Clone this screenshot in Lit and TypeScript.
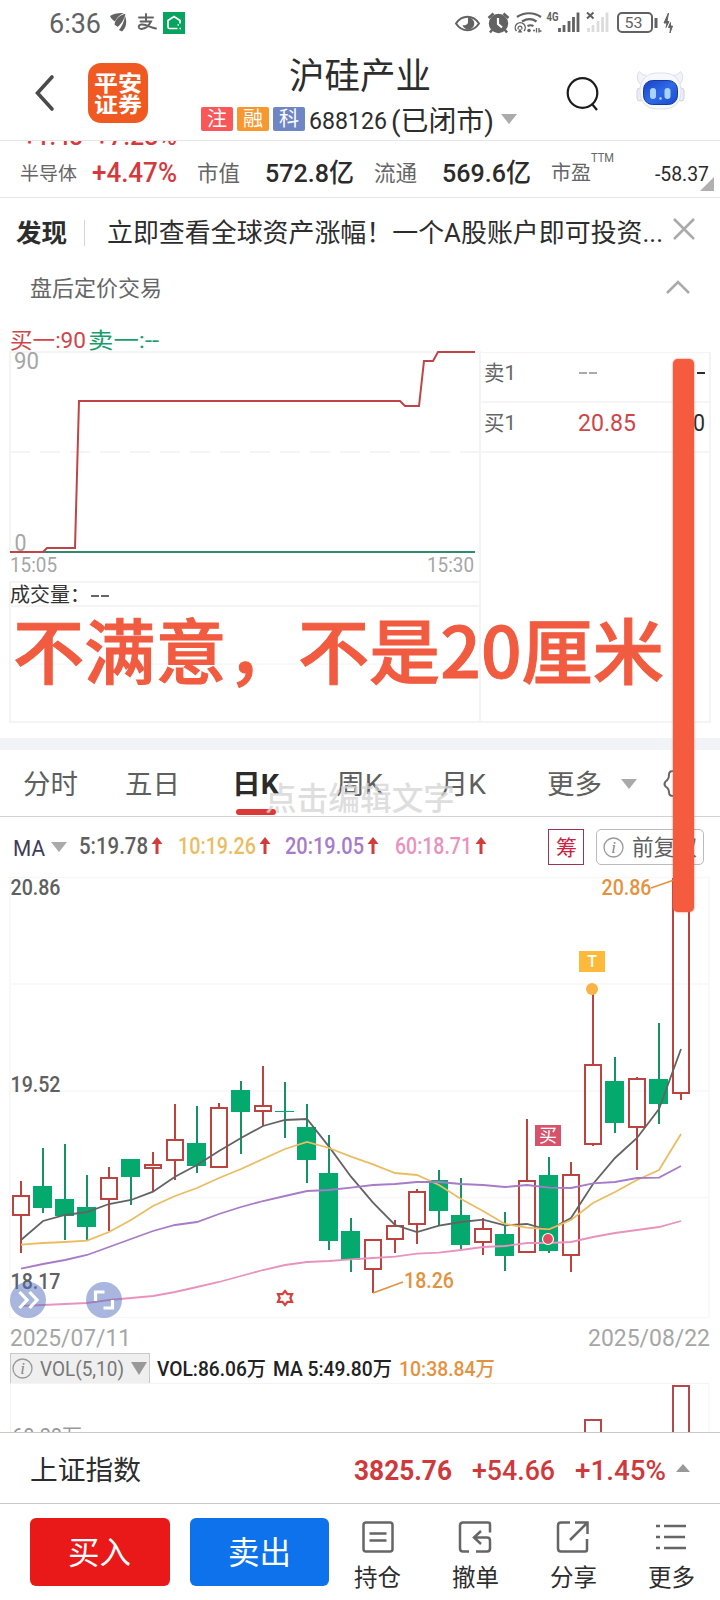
import { LitElement, css, html, svg } from "lit";
import { customElement, property } from "lit/decorators.js";

// [open side top, open side bottom, high, low] in chart pixels, "r" up, "g" down
type Candle = ["r" | "g", number, number, number, number];

const CANDLES: Candle[] = [
  ["r", 1195, 1216, 1181, 1253],
  ["g", 1186, 1208, 1148, 1213],
  ["g", 1199, 1216, 1144, 1240],
  ["g", 1207, 1227, 1175, 1240],
  ["r", 1177, 1200, 1167, 1231],
  ["g", 1159, 1177, 1159, 1205],
  ["r", 1164, 1169, 1152, 1192],
  ["r", 1139, 1161, 1104, 1180],
  ["g", 1143, 1166, 1106, 1173],
  ["r", 1107, 1168, 1103, 1168],
  ["g", 1090, 1112, 1081, 1154],
  ["r", 1105, 1112, 1066, 1126],
  ["g", 1111, 1112, 1082, 1138],
  ["g", 1127, 1160, 1104, 1183],
  ["g", 1173, 1241, 1135, 1250],
  ["g", 1231, 1260, 1218, 1272],
  ["r", 1239, 1270, 1239, 1293],
  ["r", 1225, 1240, 1220, 1253],
  ["r", 1191, 1225, 1189, 1244],
  ["g", 1180, 1211, 1170, 1226],
  ["g", 1215, 1245, 1178, 1249],
  ["r", 1228, 1243, 1218, 1255],
  ["g", 1234, 1256, 1212, 1271],
  ["r", 1180, 1253, 1119, 1253],
  ["g", 1175, 1251, 1157, 1253],
  ["r", 1174, 1256, 1162, 1272],
  ["r", 1064, 1145, 990, 1146],
  ["g", 1081, 1123, 1057, 1133],
  ["r", 1078, 1128, 1077, 1170],
  ["g", 1079, 1104, 1023, 1124],
  ["r", 878, 1094, 878, 1100],
];

// offsets below y=1050, in thirds of a pixel
const AVERAGES = [
  {
    color: "#636363",
    values: [570, 513, 495, 486, 462, 450, 425, 380, 345, 303, 264, 228, 210, 207, 290, 380, 458, 525, 546, 527, 516, 509, 526, 522, 540, 504, 402, 324, 264, 177, -3],
  },
  {
    color: "#eabd62",
    values: [584, 579, 576, 572, 546, 510, 468, 438, 414, 384, 357, 327, 297, 276, 294, 320, 343, 369, 375, 405, 447, 483, 522, 533, 538, 510, 459, 426, 390, 360, 252],
  },
  {
    color: "#a87bc8",
    values: [656, 642, 630, 615, 591, 567, 543, 525, 516, 492, 471, 453, 438, 423, 420, 413, 405, 402, 396, 396, 402, 405, 411, 405, 413, 414, 400, 396, 384, 383, 348],
  },
  {
    color: "#e992be",
    values: [768, 765, 762, 759, 750, 744, 738, 726, 711, 696, 678, 660, 645, 636, 633, 628, 624, 620, 611, 608, 600, 591, 588, 579, 579, 576, 561, 549, 540, 531, 513],
  },
];

const FONT = "Roboto, 'Noto Sans CJK SC', sans-serif";
const candleX = (i: number) => 21 + i * 22;

// Single line of text squeezed to a given width, centred on its box
@customElement("fit-text")
export class FitText extends LitElement {
  static styles = css`
    :host {
      display: inline-block;
      flex: none;
    }
    svg {
      display: block;
      overflow: visible;
      font-family: var(--fit-font, Roboto, "Noto Sans CJK SC", sans-serif);
      fill: currentColor;
      stroke: currentColor;
      stroke-width: var(--fit-stroke, 0);
    }
  `;

  @property({ type: Number }) w = 0;
  @property({ type: Number }) size = 20;
  @property({ type: Number }) weight = 400;
  @property() text = "";

  render() {
    return html`
      <svg width=${this.w} height=${this.size}>
        <text
          x="0"
          y=${this.size * 0.86}
          font-size=${this.size}
          font-weight=${this.weight}
          textLength=${this.w}
          lengthAdjust="spacingAndGlyphs"
        >${this.text}</text>
      </svg>
    `;
  }
}

const fit = (text: string, w: number, size: number, weight = 400, cls = "") =>
  html`<fit-text class=${cls} .text=${text} .w=${w} .size=${size} .weight=${weight}></fit-text>`;

@customElement("status-bar")
export class StatusBar extends LitElement {
  static styles = css`
    :host {
      display: flex;
      align-items: center;
      height: 46px;
      padding: 0 46px 0 49px;
      box-sizing: border-box;
      color: #626262;
    }
    svg {
      display: block;
      flex: none;
    }
    .left {
      margin-left: 9px;
    }
    .right {
      margin-left: auto;
    }
  `;

  render() {
    return html`
      ${fit("6:36", 52, 27)}
      <svg class="left" width="76" height="24" viewBox="110 11 76 24">
        <g fill="#626262">
          <path d="M110 16c5-3 9-3 14-3-5 2-7 5-9 8.500-2-1-4-3-5-5.500z" />
          <path d="M114.500 24.500c1-6 6-10 11-10.500-1 4-3 9-8 13-.500-1-2-1.500-3-2.500z" />
          <path d="M119 30c3-4 5-8 6-14 2.500 6 1 12-3 15.500z" />
        </g>
        <g fill="none" stroke="#626262" stroke-width="1.900" stroke-linecap="round">
          <path d="M139 17.500h14M146 14v7M140.500 21.500h10.500c-2 4-5 7-9.500 7.500-4.500-.500-3-5 1-4.500 4.500.500 8 3 13.500 4" />
        </g>
        <rect x="163" y="12" width="22" height="22" fill="#08a35f" />
        <path
          d="M180 23.500v-3l-6-4-6 4V27q0 1.500 1.500 1.500h8M177.500 25h1.500M179.500 28.500h1.500"
          fill="none"
          stroke="#fff"
          stroke-width="1.700"
        />
      </svg>
      <svg class="right" width="220" height="28" viewBox="454 9 220 28">
        <path d="M456 23.500c6-9 17-9 23 0-6 9-17 9-23 0z" fill="none" stroke="#626262" stroke-width="2" />
        <path d="M468 17.500a6 6 0 1 1-5.500 7.500c3 1 6-1 5.500-3.500z" fill="#626262" />
        <circle cx="498.500" cy="23.500" r="9.700" fill="#626262" />
        <path d="M488.500 18l5-4.500M508.500 18l-5-4.500M492 30l-2 2.500M505 30l2 2.500" stroke="#626262" stroke-width="2.500" />
        <path d="M498 18v6l4 3.500" fill="none" stroke="#fff" stroke-width="2.200" />
        <g fill="none" stroke="#626262" stroke-width="2.200">
          <path d="M517 17c7-5 17-5 24 0M522 21.500c5-3 10-3 14.500 0" />
          <path d="M527.500 26c2-1 4-1 6 0" />
          <path d="M516.500 31a5 5 0 1 1 7.500 0" stroke-width="1.400" />
          <path d="M518.500 29.500a2 2 0 1 1 3 0" stroke-width="1.200" />
        </g>
        <path d="M520 28.500l2.300 4h-4.600z" fill="#626262" />
        <circle cx="529" cy="30.500" r="1.800" fill="#626262" />
        <path d="M533 30.500h2M536.500 28v4.500M539 31h2.500M539 28v4.500" stroke="#626262" stroke-width="1.300" />
        <text x="546.500" y="20.500" font-family=${FONT} font-size="12" font-weight="700" fill="#626262" textLength="12" lengthAdjust="spacingAndGlyphs">4G</text>
        <g stroke="#626262" stroke-width="2.800">
          <path d="M559.500 28v4M564 25v7M569 21v11M573.500 17v15M578 12.500v19.500" />
        </g>
        <path d="M587 12.500l6.500 6M593.500 12.500l-6.500 6" stroke="#626262" stroke-width="2" />
        <g stroke="#dcdcdc" stroke-width="2.800">
          <path d="M588.500 28v4M593 25v7M598 21v11M602.500 17v15M607 12.500v19.500" />
        </g>
        <rect x="618" y="13" width="34" height="19" rx="4" fill="none" stroke="#626262" stroke-width="2" />
        <path d="M656 18v10" stroke="#626262" stroke-width="3" />
        <text x="624.500" y="27.500" font-family=${FONT} font-size="15.500" fill="#626262" textLength="18" lengthAdjust="spacingAndGlyphs">53</text>
        <path
          d="M668.500 13l-4.500 10h3l-1 4.500 3-6h-2zM670.500 22.500l-2 5h2l-.500 5.500 2.500-7h-2z"
          fill="#626262"
          stroke="#626262"
          stroke-width="1"
        />
      </svg>
    `;
  }
}

@customElement("page-header")
export class PageHeader extends LitElement {
  static styles = css`
    :host {
      display: grid;
      grid-template-columns: 53px 113px 365px 69px 60px;
      align-items: center;
      height: 95px;
      padding-left: 35px;
      box-sizing: border-box;
      border-bottom: 1px solid #e6e6e6;
      color: #2d2d2d;
    }
    svg {
      display: block;
    }
    .logo {
      display: flex;
      flex-direction: column;
      align-items: center;
      justify-content: center;
      width: 60px;
      height: 60px;
      border-radius: 13px;
      background: #f05a22;
      color: #fff;
    }
    .center {
      display: flex;
      flex-direction: column;
      gap: 13px;
      padding-top: 2px;
    }
    .title {
      margin-left: 88px;
    }
    .sub {
      display: flex;
      align-items: center;
      height: 24px;
    }
    .badge {
      display: flex;
      align-items: center;
      justify-content: center;
      width: 32px;
      height: 24px;
      margin-right: 4px;
      border-radius: 2px;
      color: #fff;
    }
    .reg {
      background: #f9575a;
    }
    .fin {
      background: #f6982f;
    }
    .sci {
      background: #6f86c4;
    }
    .code {
      margin-top: 4px;
    }
    .state {
      margin: 4px 0 0 4px;
    }
    .down {
      margin: 1px 0 0 7px;
    }
  `;

  render() {
    return html`
      <svg width="22" height="38" viewBox="0 0 22 38">
        <path d="M17 3L2.500 19 17 35" fill="none" stroke="#4a4a4a" stroke-width="3.600" stroke-linecap="round" />
      </svg>
      <div class="logo">${fit("平安", 48, 22, 700)} ${fit("证券", 48, 21, 700)}</div>
      <div class="center">
        ${fit("沪硅产业", 142, 36, 400, "title")}
        <div class="sub">
          <span class="badge reg">${fit("注", 20, 20)}</span>
          <span class="badge fin">${fit("融", 20, 20)}</span>
          <span class="badge sci">${fit("科", 20, 20)}</span>
          ${fit("688126", 78, 23, 400, "code")} ${fit("(已闭市)", 103, 28, 400, "state")}
          <svg class="down" width="16" height="10"><path d="M0 0h16l-8 10z" fill="#ababab" /></svg>
        </div>
      </div>
      <svg width="34" height="36" viewBox="566 75 34 36">
        <circle cx="582.500" cy="93" r="14.800" fill="none" stroke="#1c1c1c" stroke-width="2.200" />
        <path d="M592 104l5 6" stroke="#1c1c1c" stroke-width="2.200" />
      </svg>
      <svg width="50" height="44" viewBox="635 71 50 44">
        <defs>
          <linearGradient id="face" x1="0" y1="0" x2="1" y2="1">
            <stop offset="0" stop-color="#1743c4" />
            <stop offset=".5" stop-color="#2f69e6" />
            <stop offset="1" stop-color="#1a49cd" />
          </linearGradient>
        </defs>
        <path d="M640 84c-4-5-3-10-.500-12.500 2 3 4 4 7 3.500M680 84c4-5 3-10 .500-12.500-2 3-4 4-7 3.500" fill="#f2f4f9" stroke="#d9dde8" />
        <rect x="637" y="88" width="6" height="13" rx="3" fill="#eceef3" stroke="#cfd2da" />
        <rect x="678" y="88" width="6" height="13" rx="3" fill="#eceef3" stroke="#cfd2da" />
        <rect x="640" y="73" width="41" height="36" rx="16" fill="#f6f8fd" stroke="#dbe1ef" />
        <rect x="643.500" y="80.500" width="34" height="24" rx="9" fill="url(#face)" stroke="#163aa5" />
        <rect x="650" y="88" width="6" height="11" rx="3" fill="#a9d4ff" />
        <rect x="664.500" y="88" width="6" height="11" rx="3" fill="#a9d4ff" />
        <circle cx="660.500" cy="98.500" r="1.300" fill="#a9d4ff" />
      </svg>
    `;
  }
}

@customElement("quote-strip")
export class QuoteStrip extends LitElement {
  static styles = css`
    :host {
      display: block;
      height: 57px;
      box-sizing: border-box;
      border-bottom: 1px solid #e6e6e6;
    }
    .cut {
      display: flex;
      align-items: flex-end;
      gap: 12px;
      height: 5px;
      padding-left: 23px;
      overflow: hidden;
      color: #d5393d;
    }
    .cut fit-text {
      margin-bottom: -3px;
    }
    .row {
      display: grid;
      grid-template-columns: 72px 105px 68px 109px 68px 109px 104px 58px;
      align-items: center;
      height: 51px;
      padding: 3px 0 0 20px;
      box-sizing: border-box;
    }
    .label {
      color: #666;
    }
    .value {
      color: #2b2b2b;
    }
    .up {
      color: #d5393d;
    }
    .figure {
      margin-top: -2px;
    }
    .pe {
      display: flex;
      align-items: flex-start;
    }
    .ttm {
      margin-top: -12px;
    }
    .last {
      display: flex;
      position: relative;
    }
    .corner {
      position: absolute;
      right: -1px;
      top: 14px;
    }
  `;

  render() {
    return html`
      <div class="cut">${fit("+1.43", 60, 26, 500)} ${fit("+7.23%", 82, 26, 500)}</div>
      <div class="row">
        ${fit("半导体", 57, 18.5, 400, "label")} ${fit("+4.47%", 85, 27, 500, "up figure")}
        ${fit("市值", 43, 21.5, 400, "label")} ${fit("572.8亿", 89, 26.5, 500, "value figure")}
        ${fit("流通", 43, 21.5, 400, "label")} ${fit("569.6亿", 89, 26.5, 500, "value figure")}
        <span class="pe">
          ${fit("市盈", 40, 20, 400, "label")} ${fit("TTM", 23, 13, 400, "label ttm")}
        </span>
        <span class="last">
          ${fit("-58.37", 54, 20.5, 400, "value")}
          <svg class="corner" width="14" height="14"><path d="M14 0v14H0z" fill="#b0b0b0" /></svg>
        </span>
      </div>
    `;
  }
}

@customElement("after-hours")
export class AfterHours extends LitElement {
  static styles = css`
    :host {
      display: block;
      color: #666;
    }
    svg {
      display: block;
    }
    .news {
      display: grid;
      grid-template-columns: 68px 23px 566px 30px;
      align-items: center;
      height: 66px;
      padding: 3px 0 0 16px;
      box-sizing: border-box;
      color: #2d2d2d;
    }
    .rule {
      width: 1px;
      height: 26px;
      background: #d5d5d5;
    }
    .close {
      margin-top: -8px;
    }
    .section {
      display: flex;
      align-items: center;
      justify-content: space-between;
      height: 48px;
      padding: 0 30px;
    }
    .legend {
      display: flex;
      gap: 2px;
      align-items: center;
      height: 40px;
      padding: 15px 0 0 10px;
      box-sizing: border-box;
    }
    .buy {
      color: #cf4548;
    }
    .sell {
      color: #1a9c6c;
    }
    .panel {
      display: grid;
      grid-template-columns: 480px 231px;
      height: 371px;
    }
    .book {
      border: 1px solid #f4f4f4;
      border-width: 1px 2px 2px 0;
      box-sizing: border-box;
    }
    .level {
      display: grid;
      grid-template-columns: 94px 90px 1fr;
      align-items: center;
      height: 50px;
      padding: 0 4px 9px 4px;
      box-sizing: border-box;
      border-bottom: 2px solid #f5f5f5;
    }
    .qty {
      justify-self: end;
      color: #2d2d2d;
    }
  `;

  render() {
    return html`
      <div class="news">
        ${fit("发现", 51, 25.5, 700)}
        <span class="rule"></span>
        ${fit("立即查看全球资产涨幅！一个A股账户即可投资...", 556, 26)}
        <svg class="close" width="22" height="22">
          <path d="M1 1l20 20M21 1L1 21" stroke="#aaa" stroke-width="2.600" />
        </svg>
      </div>
      <div class="section">
        ${fit("盘后定价交易", 132, 22)}
        <svg width="24" height="16">
          <path d="M1 13L12 2l11 11" fill="none" stroke="#aaa" stroke-width="2.600" />
        </svg>
      </div>
      <div class="legend">
        ${fit("买一:90", 76, 21.5, 400, "buy")} ${fit("卖一:--", 71, 21.5, 400, "sell")}
      </div>
      <div class="panel">
        <svg width="480" height="371" viewBox="0 352 480 371" font-family=${FONT} overflow="visible">
          <g fill="none" stroke="#f4f4f4" stroke-width="2">
            <path d="M10 552V352h470v370M10 582v140h470M10 582h470M10 606h470M10 552h470" />
            <path d="M10 664h470" stroke-width="1" />
            <path d="M10 452h470" stroke-dasharray="20 10" />
          </g>
          <g fill="#a6a6a6">
            <text x="14" y="369" font-size="23" textLength="25" lengthAdjust="spacingAndGlyphs">90</text>
            <text x="14.500" y="551" font-size="23" textLength="12" lengthAdjust="spacingAndGlyphs">0</text>
            <text x="10" y="572" font-size="20" textLength="47" lengthAdjust="spacingAndGlyphs">15:05</text>
            <text x="427" y="572" font-size="20" textLength="47" lengthAdjust="spacingAndGlyphs">15:30</text>
          </g>
          <text x="10" y="602" font-size="20" fill="#333">成交量：</text>
          <path d="M91 596h8M101 596h8" stroke="#666" stroke-width="1.900" />
          <path d="M10 552h465" stroke="#2e8c6c" stroke-width="2" />
          <path
            d="M10 552h33l4-4h28l4-147h321l5 5h14l5-45h9l5-9h37"
            fill="none"
            stroke="#c04446"
            stroke-width="2"
          />
        </svg>
        <div class="book">
          <div class="level">
            ${fit("卖1", 32, 21)}
            <svg width="20" height="4"><path d="M1 2h8M11 2h8" stroke="#aaa" stroke-width="1.800" /></svg>
            <svg class="qty" width="20" height="4"><path d="M1 2h8M12 2h8" stroke="#2d2d2d" stroke-width="2" /></svg>
          </div>
          <div class="level">
            ${fit("买1", 32, 21)} ${fit("20.85", 58, 23, 400, "buy")} ${fit("90", 24, 23, 400, "qty")}
          </div>
        </div>
      </div>
    `;
  }
}

@customElement("k-line")
export class KLine extends LitElement {
  static styles = css`
    :host {
      display: block;
      color: #5f5f5f;
    }
    svg {
      display: block;
      overflow: visible;
    }
    .tabs {
      display: grid;
      grid-template-columns: 102px 107px 104px 104px 107px 74px 43px 40px;
      align-items: center;
      height: 67px;
      padding: 1px 0 0 23px;
      box-sizing: border-box;
      border-bottom: 1px solid #d2d2d2;
    }
    .active {
      display: flex;
      flex-direction: column;
      align-items: flex-start;
      gap: 12px;
      padding-top: 18px;
      color: #2b2b2b;
    }
    .active::after {
      content: "";
      width: 40px;
      height: 6px;
      margin-left: 4px;
      border-radius: 3px;
      background: #dc3838;
    }
    .ma {
      display: grid;
      grid-template-columns: 38px 28px 99px 107px 110px 153px 48px 108px;
      align-items: center;
      height: 60px;
      padding-left: 13px;
      box-sizing: border-box;
    }
    .name {
      margin-top: 2px;
      color: #403c58;
    }
    .avg {
      display: flex;
      align-items: center;
      gap: 4px;
      padding-bottom: 3px;
    }
    .m10 {
      color: #eabd62;
    }
    .m20 {
      color: #a87bc8;
    }
    .m60 {
      color: #e992be;
    }
    .chips,
    .adjust {
      display: flex;
      align-items: center;
      justify-content: center;
      height: 36px;
      box-sizing: border-box;
    }
    .chips {
      width: 36px;
      border: 1.500px solid #9c3350;
      color: #c9213f;
    }
    .adjust {
      gap: 8px;
      border: 1px solid #bbb;
      border-radius: 5px;
    }
    .dates {
      display: flex;
      align-items: center;
      justify-content: space-between;
      height: 33px;
      padding: 1px 10px 0 10px;
      box-sizing: border-box;
      color: #a6a6a6;
    }
    .vol {
      display: flex;
      align-items: center;
      height: 31px;
      padding-left: 10px;
      gap: 7px;
      color: #222;
    }
    .picker {
      display: flex;
      align-items: center;
      width: 140px;
      height: 31px;
      padding-left: 1px;
      gap: 7px;
      box-sizing: border-box;
      border: 1px solid #c9c9c9;
      background: #efefef;
      color: #777;
    }
    .orange {
      color: #e5923e;
    }
  `;

  info() {
    return html`
      <svg width="21" height="21" viewBox="0 0 21 21">
        <circle cx="10.500" cy="10.500" r="9.500" fill="none" stroke="#999" stroke-width="1.300" />
        <text x="10.500" y="16" text-anchor="middle" font-family="Liberation Serif, serif" font-style="italic" font-size="17" fill="#888">i</text>
      </svg>
    `;
  }

  average(text: string, w: number, cls: string) {
    return html`
      <span class="avg">
        ${fit(text, w, 23.5, 500, cls)}
        <svg width="12" height="17">
          <path d="M5 17V3" stroke="#d23b38" stroke-width="3" />
          <path d="M-.500 7L5 0l5.500 7z" fill="#d23b38" />
        </svg>
      </span>
    `;
  }

  candle([kind, top, bottom, high, low]: Candle, i: number) {
    const x = candleX(i);
    if (kind === "g") {
      return svg`
        <path d="M${x} ${high}V${low}" stroke="#149363" stroke-width="2" />
        <rect x=${x - 10} y=${top} width="19" height=${bottom - top} fill="#04a96d" />
      `;
    }
    return svg`
      <path d="M${x} ${high}V${top}M${x} ${bottom}V${low}" stroke="#bd4341" stroke-width="2" />
      <rect x=${x - 8} y=${top + 1} width="16" height=${bottom - top - 2} fill="none" stroke="#bd4341" stroke-width="2" />
    `;
  }

  chart() {
    return html`
      <svg width="720" height="443" viewBox="0 877 720 443" font-family=${FONT}>
        <path d="M10 877.500h699v440H10zM10 984h699M10 1091h699M10 1197.500h699" fill="none" stroke="#f7f7f8" stroke-width="1.500" />
        ${CANDLES.map((c, i) => this.candle(c, i))}
        ${AVERAGES.map(
          (line) => svg`
            <polyline
              points=${line.values.map((v, i) => `${candleX(i)},${1050 + v / 3}`).join(" ")}
              fill="none"
              stroke=${line.color}
              stroke-width="1.800"
            />
          `
        )}
        <g font-size="22.500" font-weight="500" fill="#606060">
          <text x="10.500" y="895" textLength="50" lengthAdjust="spacingAndGlyphs">20.86</text>
          <text x="10.500" y="1092" textLength="50" lengthAdjust="spacingAndGlyphs">19.52</text>
          <text x="10.500" y="1289" textLength="50" lengthAdjust="spacingAndGlyphs">18.17</text>
        </g>
        <g font-size="22.500" font-weight="500" fill="#e5923e">
          <text x="601.500" y="895" textLength="50" lengthAdjust="spacingAndGlyphs">20.86</text>
          <text x="404" y="1288" textLength="50" lengthAdjust="spacingAndGlyphs">18.26</text>
        </g>
        <path d="M651 888l23-8M373 1293l30-11" stroke="#e5923e" stroke-width="1.800" />

        <rect x="579" y="951" width="26" height="21" fill="#fdb93a" />
        <text x="592" y="967" text-anchor="middle" font-size="16" font-weight="500" fill="#fff">T</text>
        <circle cx="592" cy="989" r="6" fill="#f9b444" />
        <rect x="535" y="1125" width="26" height="21" fill="#d6536b" />
        <text x="548" y="1142" text-anchor="middle" font-size="18" fill="#fff">买</text>
        <circle cx="548" cy="1239" r="5.500" fill="#e04e63" stroke="#fff" stroke-width="1.200" />

        <path
          d="M285 1291l2.500 3.200h4.500l-1.700 3.800 1.700 3.800h-4.500l-2.500 3.200-2.500-3.200h-4.500l1.700-3.800-1.700-3.800h4.500z"
          fill="none"
          stroke="#d6403e"
          stroke-width="2.200"
        />
        <g fill="#5470c0" fill-opacity=".5">
          <circle cx="28" cy="1300" r="18" />
          <circle cx="104" cy="1300" r="18" />
        </g>
        <g fill="none" stroke="#fff" stroke-width="3.200">
          <path d="M19.500 1292l7.500 8-7.500 8M29.500 1292l7.500 8-7.500 8" />
          <path d="M95.500 1301v-9h9M112.500 1300v8h-9" />
        </g>
      </svg>
    `;
  }

  render() {
    return html`
      <div class="tabs">
        ${fit("分时", 55, 27.5)} ${fit("五日", 55, 27.5)}
        <span class="active">${fit("日K", 47, 27.5, 700)}</span>
        ${fit("周K", 47, 27.5)} ${fit("月K", 46, 27.5)} ${fit("更多", 55, 27.5)}
        <svg width="16" height="10"><path d="M0 0h16l-8 10z" fill="#aaa" /></svg>
        <svg width="30" height="28" viewBox="663 769 30 28">
          <path
            d="M674 770.500q-6-1.500-6 3 0 5-3.500 7-2 2.500 0 5 3.500 2 3.500 6 0 4.500 6 3l3.500 2h3l3.500-2q5 1.500 5-3 0-4 1.500-6 1-2.500 0-5-1.500-2-1.500-7 0-4.500-5-3l-3.500-2h-3z"
            fill="none"
            stroke="#666"
            stroke-width="2"
          />
        </svg>
      </div>
      <div class="ma">
        ${fit("MA", 32, 22.5, 400, "name")}
        <svg width="16" height="10"><path d="M0 0h16l-8 10z" fill="#aaa" /></svg>
        ${this.average("5:19.78", 69, "m5")} ${this.average("10:19.26", 78, "m10")}
        ${this.average("20:19.05", 79, "m20")} ${this.average("60:18.71", 77, "m60")}
        <span class="chips">${fit("筹", 21, 21)}</span>
        <span class="adjust">${this.info()} ${fit("前复权", 65, 22)}</span>
      </div>
      ${this.chart()}
      <div class="dates">${fit("2025/07/11", 121, 24)} ${fit("2025/08/22", 122, 24)}</div>
      <div class="vol">
        <span class="picker">
          ${this.info()} ${fit("VOL(5,10)", 84, 21)}
          <svg width="16" height="14"><path d="M0 0h16l-8 13z" fill="#999" /></svg>
        </span>
        ${fit("VOL:86.06万", 109, 20, 500)} ${fit("MA 5:49.80万", 119, 20, 500)}
        ${fit("10:38.84万", 96, 20, 500, "orange")}
      </div>
      <svg width="720" height="48" viewBox="0 1384 720 48" font-family=${FONT}>
        <path d="M10.500 1432v-48.500h698.500v48" fill="none" stroke="#f4f4f4" />
        <text x="12" y="1444" font-size="22" fill="#999" textLength="70" lengthAdjust="spacingAndGlyphs">60.28万</text>
        <path d="M585 1432v-12h16v12M673 1432v-46h16v46" fill="none" stroke="#b5484a" stroke-width="2" />
      </svg>
    `;
  }
}

@customElement("trade-bar")
export class TradeBar extends LitElement {
  static styles = css`
    :host {
      display: block;
      position: relative;
      background: #fff;
    }
    svg {
      display: block;
    }
    .index {
      display: grid;
      grid-template-columns: 324px 118px 103px 101px 20px;
      align-items: center;
      height: 71px;
      padding: 3px 0 0 30px;
      box-sizing: border-box;
      border-top: 1px solid #c9c9c9;
      color: #d0393c;
    }
    .name {
      color: #2d2d2d;
    }
    .caret {
      margin-top: -4px;
    }
    .actions {
      display: flex;
      align-items: center;
      height: 97px;
      padding-left: 30px;
      box-sizing: border-box;
      border-top: 1px solid #c9c9c9;
      color: #2d2d2d;
    }
    .button {
      display: flex;
      align-items: center;
      justify-content: center;
      width: 140px;
      height: 68px;
      padding-top: 2px;
      margin-right: 20px;
      box-sizing: border-box;
      border-radius: 6px;
      color: #fff;
    }
    .buy {
      background: #ea1919;
    }
    .sell {
      background: #0d72ec;
    }
    .action {
      display: flex;
      flex-direction: column;
      align-items: center;
      gap: 13px;
      width: 98px;
      padding-top: 7px;
    }
    .menu {
      display: flex;
      margin-left: -21px;
    }
  `;

  action(label: string, icon: unknown) {
    return html`
      <div class="action">
        <svg width="34" height="32" viewBox="0 0 34 32" fill="none" stroke="#666" stroke-width="2.500">${icon}</svg>
        ${fit(label, 47, 23.5)}
      </div>
    `;
  }

  render() {
    return html`
      <div class="index">
        ${fit("上证指数", 111, 27.7, 400, "name")} ${fit("3825.76", 98, 28, 700)}
        ${fit("+54.66", 83, 28, 500)} ${fit("+1.45%", 91, 28, 500)}
        <svg class="caret" width="14" height="8"><path d="M0 8h14L7 0z" fill="#999" /></svg>
      </div>
      <div class="actions">
        <span class="button buy">${fit("买入", 63, 31.5)}</span>
        <span class="button sell">${fit("卖出", 63, 31.5)}</span>
        <div class="menu">
          ${this.action("持仓", svg`<rect x="3.500" y="1.500" width="29" height="29" rx="2.500" /><path d="M9.500 12.500h17M9.500 19.500h17" />`)}
          ${this.action("撤单", svg`<path d="M11 30.500H5q-3 0-3-3v-23q0-3 3-3h25q2 0 2 2v8M18 30.500h11q3 0 3-3v-8q0-3-3-3H16M23 10l-7 6.500 7 6.500" />`)}
          ${this.action("分享", svg`<path d="M14 1.500H5q-3 0-3 3v23q0 3 3 3h24q2 0 2-2V18M14 19L31 2M19 1.500h12.500V13" />`)}
          ${this.action("更多", svg`<path d="M10 5h22M10 16h21M10 27h22M2 5h4M2 16h4M2 27h4" />`)}
        </div>
      </div>
    `;
  }
}

@customElement("app-root")
export class AppRoot extends LitElement {
  static styles = css`
    :host {
      display: block;
      position: relative;
      width: 720px;
      height: 1600px;
      overflow: hidden;
      background: #fff;
    }
    .band {
      height: 12px;
      margin-top: 15px;
      background: #f2f3f8;
    }
    /* captions and the ruler bar drawn on top of the page */
    .caption,
    .hint,
    .ruler {
      position: absolute;
    }
    .caption {
      --fit-font: "Noto Sans CJK SC", sans-serif;
      --fit-stroke: 1px;
      left: 13px;
      top: 617px;
      color: #f15b40;
    }
    .hint {
      left: 265px;
      top: 783px;
      color: rgba(214, 214, 214, 0.8);
    }
    .ruler {
      left: 673px;
      top: 359px;
      width: 21px;
      height: 553px;
      border-radius: 5px;
      background: #f55b3f;
      box-shadow: 0 0 2px #f55b3f;
    }
  `;

  render() {
    return html`
      <status-bar></status-bar>
      <page-header></page-header>
      <quote-strip></quote-strip>
      <after-hours></after-hours>
      <div class="band"></div>
      <k-line></k-line>
      <trade-bar></trade-bar>
      ${fit("不满意，不是20厘米", 651, 71, 500, "caption")}
      ${fit("点击编辑文字", 190, 31.5, 500, "hint")}
      <div class="ruler"></div>
    `;
  }
}
